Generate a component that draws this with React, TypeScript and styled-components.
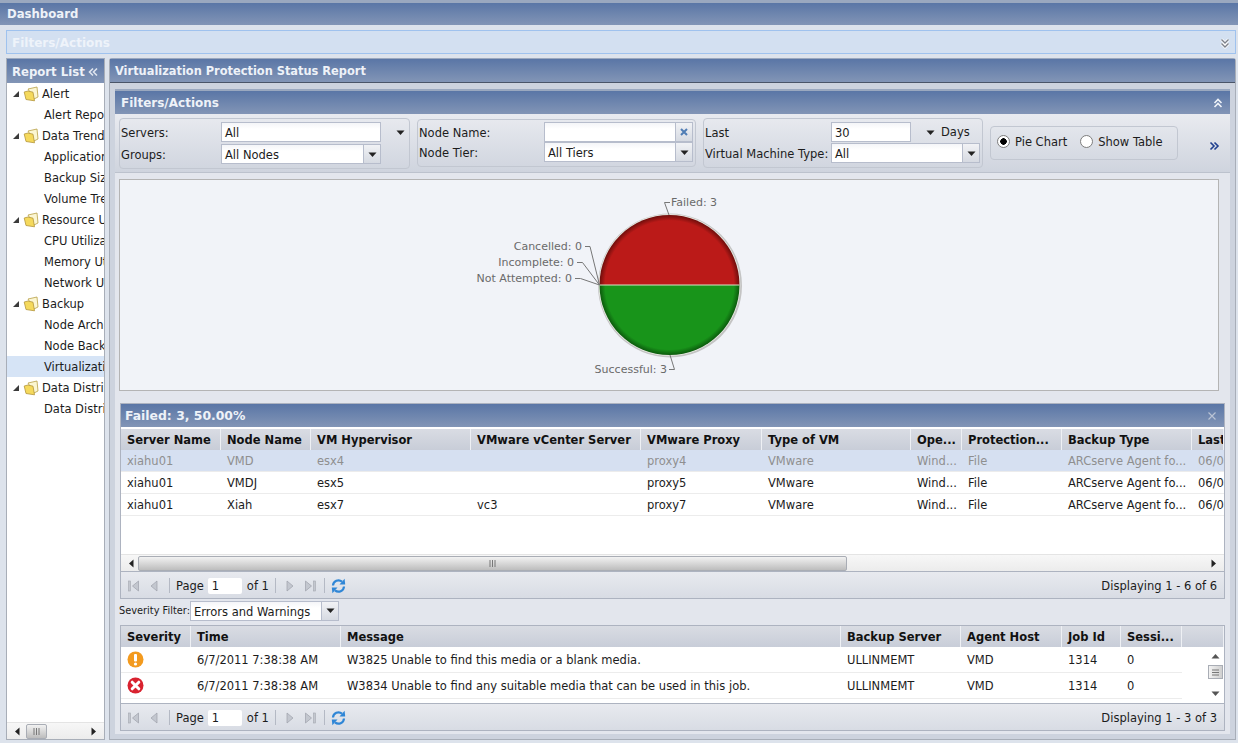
import React from "react";
import styled, {createGlobalStyle} from "styled-components";

const GlobalStyle = createGlobalStyle`
  html, body {
    margin: 0;
    width: 1238px;
    height: 743px;
    overflow: hidden;
    background: #dde3ec;
    font-family: "DejaVu Sans", Verdana, sans-serif;
    font-size: 11.5px;
    color: #1c1c1c;
  }
  * {
    box-sizing: border-box;
  }
`;

const headerGradient = "linear-gradient(#5a76a6, #8295b6)";

const Page = styled.div`
  width: 1238px;
  height: 743px;
  display: flex;
  flex-direction: column;
`;

const TopBar = styled.div`
  height: 25px;
  flex: none;
  border-top: 3px solid #9aa8bf;
  background: ${headerGradient};
  color: #eef2f8;
  font-weight: bold;
  font-size: 11.7px;
  padding-left: 7px;
  display: flex;
  align-items: center;
`;

const Workspace = styled.div`
  flex: 1;
  display: flex;
  flex-direction: column;
  gap: 4px;
  padding: 5px 2px 3px 6px;
  min-height: 0;
`;

const CollapsedBar = styled.div`
  height: 24px;
  flex: none;
  background: #d3e0f1;
  border: 1px solid #9fc2ee;
  color: #eef3fa;
  font-weight: bold;
  font-size: 12px;
  padding: 2px 5px 0 5px;
  display: flex;
  align-items: center;
  justify-content: space-between;
`;

const Main = styled.div`
  flex: 1;
  display: flex;
  gap: 4px;
  min-height: 0;
`;

const Sidebar = styled.aside`
  width: 99px;
  flex: none;
  display: flex;
  flex-direction: column;
  border: 1px solid #a8aeb8;
  border-top-color: #9aa8bf;
  background: #fff;
`;

const SideHeader = styled.div`
  height: 24px;
  flex: none;
  background: ${headerGradient};
  color: #eef2f8;
  font-weight: bold;
  font-size: 11.7px;
  padding: 1px 6px 0 5px;
  display: flex;
  align-items: center;
  justify-content: space-between;
  white-space: nowrap;
`;

const Tree = styled.ul`
  flex: 1;
  list-style: none;
  margin: 0;
  padding: 0;
  overflow: hidden;
`;

const TreeRow = styled.li<{ $selected?: boolean, $leaf?: boolean }>`
  height: 21px;
  display: flex;
  align-items: center;
  gap: 3px;
  padding-top: 1px;
  padding-left: ${props => props.$leaf ? "37px" : "5px"};
  background: ${props => props.$selected ? "#d6e4f6" : "transparent"};
  white-space: nowrap;
  overflow: hidden;
  font-size: 11.5px;
`;

const ScrollBar = styled.div`
  height: 17px;
  flex: none;
  display: flex;
  align-items: center;
  background: linear-gradient(#f7f7f7, #ececec);
  border-top: 1px solid #e4e4e4;
  padding: 0 6px;
`;

const ThumbH = styled.div<{ $width: number, $offset: number }>`
  width: ${props => props.$width}px;
  margin-left: ${props => props.$offset}px;
  height: 15px;
  margin-right: auto;
  border: 1px solid #a9adb5;
  border-radius: 2px;
  background: linear-gradient(#f2f2f2, #bdbdbd);
  display: flex;
  align-items: center;
  justify-content: center;
`;

const Report = styled.section`
  flex: 1;
  display: flex;
  flex-direction: column;
  border: 1px solid #a8aeb8;
  border-top-color: #9aa8bf;
  border-radius: 3px 3px 0 0;
  background: #cdd3de;
  min-width: 0;
`;

const ReportHeader = styled.div`
  height: 24px;
  flex: none;
  background: ${headerGradient};
  border-bottom: 1px solid #4a5568;
  color: #eef2f8;
  font-weight: bold;
  font-size: 11.4px;
  padding: 1px 0 0 5px;
  display: flex;
  align-items: center;
`;

const ReportBody = styled.div`
  flex: 1;
  padding: 6px 5px 5px 5px;
  display: flex;
  flex-direction: column;
  min-height: 0;
`;

const PanelHeader = styled.div<{ $big?: boolean }>`
  height: ${props => props.$big ? "25px" : "23px"};
  flex: none;
  background: ${headerGradient};
  border-top: ${props => props.$big ? "2px solid #9aa8bf" : "none"};
  color: #eef2f8;
  font-weight: bold;
  font-size: ${props => props.$big ? "12px" : "12.4px"};
  padding: 0 7px 0 ${props => props.$big ? "6px" : "4px"};
  display: flex;
  align-items: center;
  justify-content: space-between;
`;

const Toolbar = styled.div`
  height: 59px;
  flex: none;
  display: flex;
  align-items: flex-start;
  gap: 7px;
  padding: 4px 0 0 4px;
  background: linear-gradient(#e9ebf0, #cfd4de);
  border-bottom: 1px solid #bcc2cd;
`;

const Group = styled.div<{ $width: number, $height: number, $top?: number, $pad?: number, $gap?: number }>`
  width: ${props => props.$width}px;
  height: ${props => props.$height}px;
  margin-top: ${props => props.$top || 0}px;
  flex: none;
  border: 1px solid #c2c7d1;
  border-radius: 4px;
  padding: ${props => props.$pad ?? 3}px 2px 0 1px;
  display: flex;
  flex-direction: column;
  gap: ${props => props.$gap ?? 2}px;
`;

const RadioGroup = styled(Group)`
  flex-direction: row;
  align-items: center;
  gap: 13px;
  padding: 0 0 3px 6px;
`;

const FieldRow = styled.div`
  display: flex;
  align-items: center;
  height: 20px;
`;

const Label = styled.label<{ $width: number }>`
  width: ${props => props.$width}px;
  flex: none;
  white-space: nowrap;
  font-size: 11.5px;
  padding-top: 1px;
`;

const Combo = styled.div<{ $width: number }>`
  width: ${props => props.$width}px;
  height: 20px;
  flex: none;
  display: flex;
  border: 1px solid #b7bdcc;
  background: linear-gradient(#f4f5f8, #fff 6px);
  font-size: 11.5px;
  align-items: center;
  padding-left: 3px;
  white-space: nowrap;
`;

const ComboText = styled.span`
  flex: 1;
  padding-top: 2px;
`;

const Trigger = styled.span`
  width: 17px;
  height: 18px;
  flex: none;
  border-left: 1px solid #b7bdcc;
  background: linear-gradient(#f1f2f5, #d6dae2);
  display: flex;
  align-items: center;
  justify-content: center;
`;

const LooseArrow = styled.span<{ $offset: number }>`
  margin-left: ${props => props.$offset}px;
  display: inline-flex;
`;

const DaysText = styled.span`
  margin-left: 6px;
  font-size: 11.5px;
`;

const Radio = styled.span`
  display: flex;
  align-items: center;
  gap: 5px;
  font-size: 11.5px;
  white-space: nowrap;
`;

const RadioCircle = styled.span<{ $checked?: boolean }>`
  width: 13px;
  height: 13px;
  border-radius: 50%;
  border: 1px solid #7d7d7d;
  background: ${props => props.$checked
    ? "radial-gradient(circle, #000 0 3px, #fff 3.5px)"
    : "#fff"};
`;

const MoreButton = styled.span`
  margin: 23px 0 0 24px;
  display: inline-flex;
`;

const Content = styled.div`
  flex: 1;
  background: #e3e6ed;
  padding: 6px 5px 0 4px;
  display: flex;
  flex-direction: column;
  min-height: 0;
`;

const ChartBox = styled.div`
  width: 1100px;
  height: 212px;
  flex: none;
  border: 1px solid #b4b4b4;
  background: #f1f3f8;
  margin-bottom: 12px;
`;

const GridPanel = styled.div<{ $height: number }>`
  height: ${props => props.$height}px;
  margin-left: 1px;
  flex: none;
  display: flex;
  flex-direction: column;
  border: 1px solid #adb3c0;
  background: #fff;
`;

const GridHead = styled.div<{ $columns: string, $top?: number }>`
  height: ${props => 21 + (props.$top || 0)}px;
  flex: none;
  display: grid;
  grid-template-columns: ${props => props.$columns};
  padding-top: ${props => props.$top || 0}px;
  background: #fff;
  overflow: hidden;
`;

const HeadCell = styled.div`
  display: flex;
  align-items: center;
  padding: 1px 0 0 6px;
  border-right: 1px solid #eef0f4;
  background: linear-gradient(#d9dce3, #c8cdd8);
  font-weight: bold;
  font-size: 11.5px;
  color: #111;
  white-space: nowrap;
  overflow: hidden;
`;

const GridRows = styled.div`
  flex: 1;
  display: flex;
  min-height: 0;
  overflow: hidden;
`;

const RowList = styled.div`
  flex: 1;
  min-width: 0;
  overflow: hidden;
`;

const Row = styled.div<{ $columns: string, $height: number, $inset?: number, $selected?: boolean }>`
  height: ${props => props.$height}px;
  display: grid;
  grid-template-columns: ${props => props.$columns};
  align-items: center;
  padding-top: ${props => props.$inset || 0}px;
  border-bottom: 1px solid #ececec;
  background: ${props => props.$selected ? "#d6e0f1" : "#fff"};
  color: ${props => props.$selected ? "#8f8f8f" : "#1c1c1c"};
  font-size: 11.5px;
`;

const Cell = styled.div`
  padding-left: 6px;
  white-space: nowrap;
  overflow: hidden;
  display: flex;
  align-items: center;
`;

const VerticalBar = styled.div`
  width: 42px;
  flex: none;
  display: flex;
  flex-direction: column;
  align-items: flex-end;
  padding: 5px 1px 5px 0;
  background: #fff;
`;

const ThumbV = styled.div`
  width: 15px;
  height: 14px;
  margin: 4px 0 auto;
  border: 1px solid #a9adb5;
  background: linear-gradient(90deg, #f2f2f2, #cfcfcf);
  display: flex;
  align-items: center;
  justify-content: center;
`;

const ArrowHolder = styled.span`
  width: 15px;
  height: 9px;
  display: flex;
  justify-content: center;
`;

const Pager = styled.div`
  height: 27px;
  flex: none;
  display: flex;
  align-items: center;
  padding: 1px 7px 0 7px;
  background: linear-gradient(#e8eaef, #d8dce4);
  border-top: 1px solid #adb3c0;
  font-size: 11.5px;
  white-space: nowrap;
`;

const PagerButton = styled.span<{ $gap: number }>`
  display: inline-flex;
  margin-left: ${props => props.$gap}px;
`;

const PagerSep = styled.span<{ $gap: number }>`
  width: 1px;
  height: 15px;
  background: #b4b9c4;
  margin-left: ${props => props.$gap}px;
`;

const PagerText = styled.span<{ $gap: number }>`
  margin-left: ${props => props.$gap}px;
`;

const PageInput = styled.span`
  width: 34px;
  height: 16px;
  margin-left: 4px;
  background: #fff;
  border-radius: 2px;
  padding-left: 4px;
  display: flex;
  align-items: center;
`;

const PagerInfo = styled.span`
  margin-left: auto;
`;

const SeverityRow = styled.div`
  height: 21px;
  margin: 1px 0 4px;
  flex: none;
  display: flex;
  align-items: center;
  font-size: 11.5px;
`;

const SeverityLabel = styled.span`
  width: 71px;
  font-size: 9.8px;
  white-space: nowrap;
`;

function Arrow(props: { dir: "down" | "left" | "right" | "up", color?: string, size?: number }) {
    const size = props.size || 9
    const points = {
        down: "0.5,2.5 8.5,2.5 4.5,7",
        up: "0.5,6.5 8.5,6.5 4.5,2",
        left: "6.5,0.5 6.5,8.5 2,4.5",
        right: "2.5,0.5 2.5,8.5 7,4.5",
    }[props.dir]
    return (
        <svg width={size} height={size} viewBox="0 0 9 9">
            <polygon points={points} fill={props.color || "#222"}/>
        </svg>
    )
}

function Expander() {
    return (
        <svg width="8" height="8" viewBox="0 0 8 8" style={{flex: "none"}}>
            <polygon points="7,1 7,7 1,7" fill="#3b3b3b"/>
        </svg>
    )
}

function Folder() {
    return (
        <svg width="16" height="16" viewBox="0 0 16 16" style={{flex: "none"}}>
            <path d="M5 3 L14 1 L15 11 L11 13 Z" fill="#fbf6d2" stroke="#b89f45" strokeWidth="0.8"/>
            <path d="M1.2 6 L5 5 L10 6.2 L11.5 14.8 L3 13.5 Z" fill="#f5d95c" stroke="#b4963a" strokeWidth="0.8"/>
        </svg>
    )
}

function DoubleChevron(props: { dir: "left" | "right" | "up" | "down", color: string, width?: number, halo?: boolean }) {
    const w = props.width || 1.6
    const paths = {
        left: "M5 1.5 L1.5 5 L5 8.5 M9 1.5 L5.5 5 L9 8.5",
        right: "M1.5 1.5 L5 5 L1.5 8.5 M5.5 1.5 L9 5 L5.5 8.5",
        up: "M1.5 5 L5 1.5 L8.5 5 M1.5 9 L5 5.5 L8.5 9",
        down: "M1.5 1.5 L5 5 L8.5 1.5 M1.5 5.5 L5 9 L8.5 5.5",
    }[props.dir]
    return (
        <svg width="10" height="10" viewBox="0 0 10 10" overflow="visible">
            {props.halo && <path d={paths} fill="none" stroke="#fff" strokeWidth={w + 1.6}/>}
            <path d={paths} fill="none" stroke={props.color} strokeWidth={w}/>
        </svg>
    )
}

function FirstLast(props: { last?: boolean }) {
    return (
        <svg width="12" height="12" viewBox="0 0 12 12" style={{transform: props.last ? "scaleX(-1)" : undefined}}>
            <rect x="0.5" y="1" width="2" height="10" fill="#c3c7cf" stroke="#a3a7b0" strokeWidth="0.6"/>
            <polygon points="10.5,1 10.5,11 4.5,6" fill="#c3c7cf" stroke="#9da1aa" strokeWidth="0.7"/>
        </svg>
    )
}

function PrevNext(props: { next?: boolean }) {
    return (
        <svg width="8" height="12" viewBox="0 0 8 12" style={{transform: props.next ? "scaleX(-1)" : undefined}}>
            <polygon points="7,1 7,11 1,6" fill="#c3c7cf" stroke="#9da1aa" strokeWidth="0.7"/>
        </svg>
    )
}

function RefreshIcon() {
    return (
        <svg width="15" height="16" viewBox="0 0 15 16">
            <g fill="none" stroke="#2f86d6" strokeWidth="2.2">
                <path d="M2 7.5 A5.5 5.5 0 0 1 11 3.6"/>
                <path d="M13 8.5 A5.5 5.5 0 0 1 4 12.4"/>
            </g>
            <polygon points="8.5,6.5 14.2,6.5 13.6,0.8" fill="#2f86d6"/>
            <polygon points="6.5,9.5 0.8,9.5 1.4,15.2" fill="#2f86d6"/>
        </svg>
    )
}

function WarnIcon() {
    return (
        <svg width="17" height="17" viewBox="0 0 17 17">
            <circle cx="8.5" cy="8.5" r="8" fill="#f39a1e"/>
            <rect x="7" y="3" width="3" height="7.5" rx="1" fill="#fff"/>
            <circle cx="8.5" cy="13" r="1.6" fill="#fff"/>
        </svg>
    )
}

function ErrorIcon() {
    return (
        <svg width="17" height="17" viewBox="0 0 17 17">
            <circle cx="8.5" cy="8.5" r="8" fill="#d9222f"/>
            <path d="M5.2 5.2 L11.8 11.8 M11.8 5.2 L5.2 11.8" stroke="#fff" strokeWidth="3" strokeLinecap="round"/>
        </svg>
    )
}

function CloseIcon() {
    return (
        <svg width="10" height="10" viewBox="0 0 10 10">
            <path d="M1.5 1.5 L8.5 8.5 M8.5 1.5 L1.5 8.5" stroke={"#b9c3d4"} strokeWidth="1.2"/>
        </svg>
    )
}

function ClearIcon() {
    return (
        <svg width="10" height="10" viewBox="0 0 10 10">
            <path d="M2 2 L8 8 M8 2 L2 8" stroke="#4f7db5" strokeWidth="2"/>
        </svg>
    )
}

function Grip(props: { vertical?: boolean }) {
    return (
        <svg width="9" height="9" viewBox="0 0 9 9">
            {props.vertical
                ? <path d="M1 2 H8 M1 4.5 H8 M1 7 H8" stroke="#777" strokeWidth="1"/>
                : <path d="M2 1 V8 M4.5 1 V8 M7 1 V8" stroke="#777" strokeWidth="1"/>}
        </svg>
    )
}

function PieChart() {
    const cx = 669.5
    const cy = 285
    const r = 70
    return (
        <svg width="1098" height="210" viewBox="120 180 1098 210" style={{display: "block"}}>
            <defs>
                <radialGradient id="redRim" gradientUnits="userSpaceOnUse" cx={cx} cy={cy} r={r}>
                    <stop offset="0.92" stopColor="#bb1a18"/>
                    <stop offset="1" stopColor="#6e0e0c"/>
                </radialGradient>
                <radialGradient id="greenRim" gradientUnits="userSpaceOnUse" cx={cx} cy={cy} r={r}>
                    <stop offset="0.92" stopColor="#18941a"/>
                    <stop offset="1" stopColor="#0c5a0d"/>
                </radialGradient>
            </defs>
            <circle cx={cx + 0.5} cy={cy + 0.5} r={r + 2} fill="#c4c4c4"/>
            <circle cx={cx} cy={cy} r={r + 0.8} fill="#eceee6"/>
            <path d={`M${cx - r} ${cy} A${r} ${r} 0 0 1 ${cx + r} ${cy} Z`} fill="url(#redRim)"/>
            <path d={`M${cx - r} ${cy} A${r} ${r} 0 0 0 ${cx + r} ${cy} Z`} fill="url(#greenRim)"/>
            <line x1={cx - r} y1={cy} x2={cx + r} y2={cy} stroke="#d8e3c8" strokeWidth="1"/>
            <g fill="none" stroke="#777" strokeWidth="1">
                <path d="M670 202.5 H664.5 L669 215"/>
                <path d="M585 246.5 H590 L599.5 285"/>
                <path d="M577 262.5 H582.5 L599.5 285"/>
                <path d="M575 278.5 H580.5 L599.5 285"/>
                <path d="M669 369.5 H674.5 L670 355"/>
            </g>
            <g fill="#6a6a6a" fontSize="11" fontFamily='"DejaVu Sans", sans-serif'>
                <text x="671" y="206">Failed: 3</text>
                <text x="582" y="250" textAnchor="end">Cancelled: 0</text>
                <text x="574" y="266" textAnchor="end">Incomplete: 0</text>
                <text x="572" y="282" textAnchor="end">Not Attempted: 0</text>
                <text x="667" y="373" textAnchor="end">Successful: 3</text>
            </g>
        </svg>
    )
}

const treeItems: { text: string, folder?: boolean, selected?: boolean }[] = [
    {text: "Alert", folder: true},
    {text: "Alert Reports"},
    {text: "Data Trends", folder: true},
    {text: "Application"},
    {text: "Backup Size"},
    {text: "Volume Trend"},
    {text: "Resource Utilization", folder: true},
    {text: "CPU Utilization"},
    {text: "Memory Utilization"},
    {text: "Network Utilization"},
    {text: "Backup", folder: true},
    {text: "Node Archive"},
    {text: "Node Backup"},
    {text: "Virtualization", selected: true},
    {text: "Data Distribution", folder: true},
    {text: "Data Distribution"},
]

const failedColumns = "100px 90px 160px 170px 121px 149px 51px 100px 130px 32px"
const failedHeads = ["Server Name", "Node Name", "VM Hypervisor", "VMware vCenter Server", "VMware Proxy", "Type of VM", "Ope...", "Protection...", "Backup Type", "Last"]
const failedRows = [
    ["xiahu01", "VMD", "esx4", "", "proxy4", "VMware", "Wind...", "File", "ARCserve Agent fo...", "06/0"],
    ["xiahu01", "VMDJ", "esx5", "", "proxy5", "VMware", "Wind...", "File", "ARCserve Agent fo...", "06/0"],
    ["xiahu01", "Xiah", "esx7", "vc3", "proxy7", "VMware", "Wind...", "File", "ARCserve Agent fo...", "06/0"],
]

const logColumns = "70px 150px 500px 120px 101px 59px 61px"
const logHeads = ["Severity", "Time", "Message", "Backup Server", "Agent Host", "Job Id", "Sessi..."]
const logRows = [
    {icon: <WarnIcon/>, cells: ["6/7/2011 7:38:38 AM", "W3825 Unable to find this media or a blank media.", "ULLINMEMT", "VMD", "1314", "0"]},
    {icon: <ErrorIcon/>, cells: ["6/7/2011 7:38:38 AM", "W3834 Unable to find any suitable media that can be used in this job.", "ULLINMEMT", "VMD", "1314", "0"]},
]

function PagingBar(props: { info: string }) {
    return (
        <Pager>
            <PagerButton $gap={0}><FirstLast/></PagerButton>
            <PagerButton $gap={10}><PrevNext/></PagerButton>
            <PagerSep $gap={11}/>
            <PagerText $gap={6}>Page</PagerText>
            <PageInput>1</PageInput>
            <PagerText $gap={5}>of 1</PagerText>
            <PagerSep $gap={6}/>
            <PagerButton $gap={10}><PrevNext next/></PagerButton>
            <PagerButton $gap={10}><FirstLast last/></PagerButton>
            <PagerSep $gap={8}/>
            <PagerButton $gap={6}><RefreshIcon/></PagerButton>
            <PagerInfo>{props.info}</PagerInfo>
        </Pager>
    )
}

export default function App() {
    return (
        <Page>
            <GlobalStyle/>
            <TopBar>Dashboard</TopBar>
            <Workspace>
                <CollapsedBar>
                    Filters/Actions
                    <DoubleChevron dir="down" color="#7c818b" width={1.4} halo/>
                </CollapsedBar>
                <Main>
                    <Sidebar>
                        <SideHeader>
                            Report List
                            <DoubleChevron dir="left" color="#dfe5ef"/>
                        </SideHeader>
                        <Tree>
                            {treeItems.map((item, index) => (
                                <TreeRow key={index} $leaf={!item.folder} $selected={item.selected}>
                                    {item.folder && <Expander/>}
                                    {item.folder && <Folder/>}
                                    {item.text}
                                </TreeRow>
                            ))}
                        </Tree>
                        <ScrollBar>
                            <Arrow dir="left"/>
                            <ThumbH $width={21} $offset={4}><Grip/></ThumbH>
                            <Arrow dir="right"/>
                        </ScrollBar>
                    </Sidebar>
                    <Report>
                        <ReportHeader>Virtualization Protection Status Report</ReportHeader>
                        <ReportBody>
                            <PanelHeader $big>
                                Filters/Actions
                                <DoubleChevron dir="up" color="#eef2f8"/>
                            </PanelHeader>
                            <Toolbar>
                                <Group $width={291} $height={51}>
                                    <FieldRow>
                                        <Label $width={100}>Servers:</Label>
                                        <Combo $width={160}><ComboText>All</ComboText></Combo>
                                        <LooseArrow $offset={15}><Arrow dir="down"/></LooseArrow>
                                    </FieldRow>
                                    <FieldRow>
                                        <Label $width={100}>Groups:</Label>
                                        <Combo $width={160}>
                                            <ComboText>All Nodes</ComboText>
                                            <Trigger><Arrow dir="down"/></Trigger>
                                        </Combo>
                                    </FieldRow>
                                </Group>
                                <Group $width={279} $height={48} $top={1} $pad={2} $gap={0}>
                                    <FieldRow>
                                        <Label $width={125}>Node Name:</Label>
                                        <Combo $width={149}>
                                            <ComboText/>
                                            <Trigger><ClearIcon/></Trigger>
                                        </Combo>
                                    </FieldRow>
                                    <FieldRow>
                                        <Label $width={125}>Node Tier:</Label>
                                        <Combo $width={149}>
                                            <ComboText>All Tiers</ComboText>
                                            <Trigger><Arrow dir="down"/></Trigger>
                                        </Combo>
                                    </FieldRow>
                                </Group>
                                <Group $width={280} $height={50} $gap={1}>
                                    <FieldRow>
                                        <Label $width={126}>Last</Label>
                                        <Combo $width={80}><ComboText>30</ComboText></Combo>
                                        <LooseArrow $offset={15}><Arrow dir="down"/></LooseArrow>
                                        <DaysText>Days</DaysText>
                                    </FieldRow>
                                    <FieldRow>
                                        <Label $width={126}>Virtual Machine Type:</Label>
                                        <Combo $width={149}>
                                            <ComboText>All</ComboText>
                                            <Trigger><Arrow dir="down"/></Trigger>
                                        </Combo>
                                    </FieldRow>
                                </Group>
                                <RadioGroup $width={188} $height={34} $top={8}>
                                    <Radio><RadioCircle $checked/>Pie Chart</Radio>
                                    <Radio><RadioCircle/>Show Table</Radio>
                                </RadioGroup>
                                <MoreButton><DoubleChevron dir="right" color="#1f3f8f"/></MoreButton>
                            </Toolbar>
                            <Content>
                                <ChartBox><PieChart/></ChartBox>
                                <GridPanel $height={196}>
                                    <PanelHeader>
                                        Failed: 3, 50.00%
                                        <CloseIcon/>
                                    </PanelHeader>
                                    <GridHead $columns={failedColumns} $top={2}>
                                        {failedHeads.map(head => <HeadCell key={head}>{head}</HeadCell>)}
                                    </GridHead>
                                    <GridRows>
                                        <RowList>
                                            {failedRows.map((row, index) => (
                                                <Row key={index} $columns={failedColumns} $height={22} $inset={1} $selected={index === 0}>
                                                    {row.map((cell, cellIndex) => <Cell key={cellIndex}>{cell}</Cell>)}
                                                </Row>
                                            ))}
                                        </RowList>
                                    </GridRows>
                                    <ScrollBar>
                                        <Arrow dir="left"/>
                                        <ThumbH $width={709} $offset={2}><Grip/></ThumbH>
                                        <Arrow dir="right"/>
                                    </ScrollBar>
                                    <PagingBar info="Displaying 1 - 6 of 6"/>
                                </GridPanel>
                                <SeverityRow>
                                    <SeverityLabel>Severity Filter:</SeverityLabel>
                                    <Combo $width={149}>
                                        <ComboText>Errors and Warnings</ComboText>
                                        <Trigger><Arrow dir="down"/></Trigger>
                                    </Combo>
                                </SeverityRow>
                                <GridPanel $height={106}>
                                    <GridHead $columns={logColumns + " 1fr"}>
                                        {logHeads.map(head => <HeadCell key={head}>{head}</HeadCell>)}
                                        <HeadCell/>
                                    </GridHead>
                                    <GridRows>
                                        <RowList>
                                            {logRows.map((row, index) => (
                                                <Row key={index} $columns={logColumns} $height={26}>
                                                    <Cell>{row.icon}</Cell>
                                                    {row.cells.map((cell, cellIndex) => <Cell key={cellIndex}>{cell}</Cell>)}
                                                </Row>
                                            ))}
                                        </RowList>
                                        <VerticalBar>
                                            <ArrowHolder><Arrow dir="up" color="#555"/></ArrowHolder>
                                            <ThumbV><Grip vertical/></ThumbV>
                                            <ArrowHolder><Arrow dir="down" color="#555"/></ArrowHolder>
                                        </VerticalBar>
                                    </GridRows>
                                    <PagingBar info="Displaying 1 - 3 of 3"/>
                                </GridPanel>
                            </Content>
                        </ReportBody>
                    </Report>
                </Main>
            </Workspace>
        </Page>
    )
}
